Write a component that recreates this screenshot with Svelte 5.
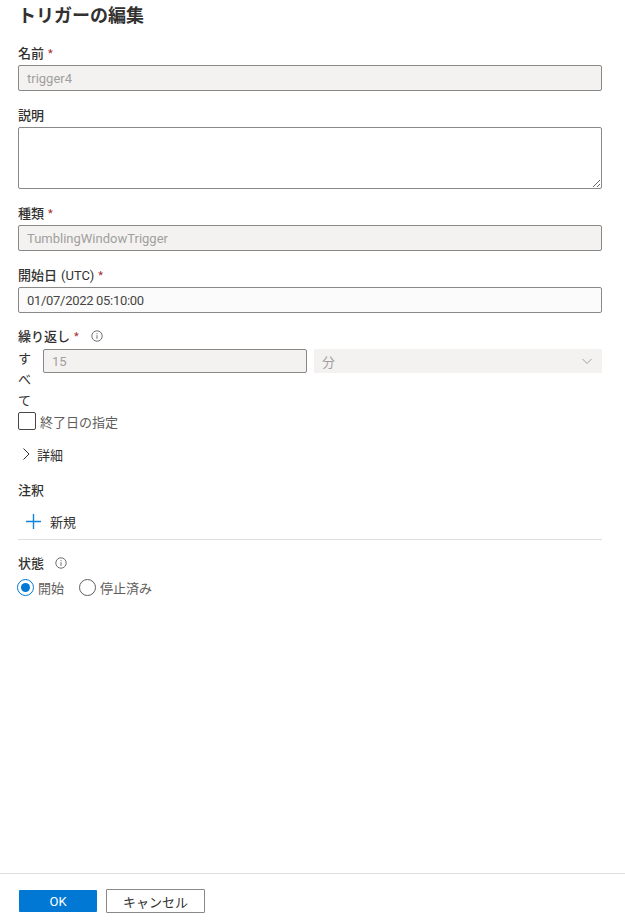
<script lang="ts">
  let description = $state('');
  let endDate = $state(false);
  let status = $state('started');
  let advancedOpen = $state(false);
</script>

<div class="panel">
  <main class="form">
    <h1>トリガーの編集</h1>

    <div class="field name">
      <div class="label">名前 <span class="req">*</span></div>
      <input class="text" type="text" value="trigger4" disabled />
    </div>

    <div class="field desc">
      <div class="label">説明</div>
      <textarea class="text area" bind:value={description}></textarea>
    </div>

    <div class="field kind">
      <div class="label">種類 <span class="req">*</span></div>
      <input class="text" type="text" value="TumblingWindowTrigger" disabled />
    </div>

    <div class="field start">
      <div class="label">開始日 <span class="utc">(UTC)</span> <span class="req">*</span></div>
      <input class="text live" type="text" value="01/07/2022 05:10:00" />
    </div>

    <div class="field repeat">
      <div class="label">
        繰り返し <span class="req">*</span>
        <svg class="info" viewBox="0 0 12 12" aria-hidden="true">
          <circle cx="6" cy="6" r="5.200" />
          <path d="M6 5.200v3.600M6 3.200v1" />
        </svg>
      </div>
      <div class="every">
        <span class="every-label">すべて</span>
        <input class="text short" type="text" value="15" disabled />
        <div class="select">
          <span>分</span>
          <svg viewBox="0 0 10 10" aria-hidden="true"><path d="M0.500 3l4.500 4.500L9.500 3" /></svg>
        </div>
      </div>
    </div>

    <label class="check">
      <input type="checkbox" bind:checked={endDate} />
      <span class="box"></span>
      <span>終了日の指定</span>
    </label>

    <button class="expander" onclick={() => (advancedOpen = !advancedOpen)}>
      <svg viewBox="0 0 8 12" aria-hidden="true"><path d="M1.500 0.500L7 6L1.500 11.500" /></svg>
      <span>詳細</span>
    </button>

    <div class="label notes">注釈</div>
    <button class="add">
      <svg viewBox="0 0 15 15" aria-hidden="true"><path d="M7.500 0v15M0 7.500h15" /></svg>
      <span>新規</span>
    </button>
    <hr />

    <div class="label state">
      状態
      <svg class="info" viewBox="0 0 12 12" aria-hidden="true">
        <circle cx="6" cy="6" r="5.200" />
        <path d="M6 5.200v3.600M6 3.200v1" />
      </svg>
    </div>
    <div class="radios">
      <label class="radio">
        <input type="radio" bind:group={status} value="started" />
        <span class="dot"></span>
        <span>開始</span>
      </label>
      <label class="radio">
        <input type="radio" bind:group={status} value="stopped" />
        <span class="dot"></span>
        <span>停止済み</span>
      </label>
    </div>
  </main>

  <footer>
    <button class="ok">OK</button>
    <button class="cancel">キャンセル</button>
  </footer>
</div>

<style>
  :global(body) {
    margin: 0;
    background: #fff;
  }

  .panel {
    height: 924px;
    display: flex;
    flex-direction: column;
    box-sizing: border-box;
    font-family: Roboto, "Noto Sans CJK JP", sans-serif;
    font-size: 13px;
    color: #323130;
  }

  .form {
    flex: 1;
    padding: 0 23px 0 18px;
  }

  h1 {
    margin: 0;
    padding-top: 3px;
    font-size: 18px;
    line-height: 26px;
    font-weight: 700;
  }

  .label {
    padding-top: 1px;
    line-height: 18px;
    font-weight: 500;
    display: flex;
    align-items: center;
    gap: 4px;
  }

  .utc {
    font-weight: 400;
  }

  .req {
    color: #a4262c;
    font-size: 11px;
    font-weight: 400;
  }

  .field {
    display: flex;
    flex-direction: column;
    gap: 2px;
  }

  .name,
  .desc,
  .kind,
  .start {
    margin-top: 15px;
  }

  .repeat {
    margin-top: 14px;
    gap: 3px;
  }

  .text {
    box-sizing: border-box;
    width: 100%;
    height: 26px;
    padding: 0 8px;
    border: 1px solid #8a8886;
    border-radius: 2px;
    font: inherit;
    color: #323130;
    background: #fff;
    outline: none;
  }

  .text:disabled {
    background: #f3f2f1;
    color: #a19f9d;
    opacity: 1;
  }

  .text.live {
    background: #fbfbfb;
    color: #484644;
    letter-spacing: -0.3px;
  }

  .area {
    display: block;
    height: 62px;
  }

  .every {
    display: flex;
    align-items: flex-start;
  }

  .every-label {
    width: 14px;
    line-height: 21px;
    margin: -1px 11px 1px 0;
    flex: none;
  }

  .short {
    flex: none;
    width: 264px;
    height: 24px;
  }

  .select {
    flex: 1;
    margin-left: 7px;
    height: 24px;
    box-sizing: border-box;
    padding: 0 10px 0 8px;
    background: #f3f2f1;
    color: #a19f9d;
    display: flex;
    align-items: center;
    justify-content: space-between;
  }

  .select svg {
    width: 10px;
    height: 10px;
    fill: none;
    stroke: #a19f9d;
    stroke-width: 1;
  }

  .info {
    width: 12px;
    height: 12px;
    margin: 0 0 2px 8px;
    fill: none;
    stroke: #605e5c;
    stroke-width: 0.9;
  }

  .state .info {
    margin-left: 7px;
  }

  .check {
    display: flex;
    align-items: center;
    gap: 4px;
    height: 18px;
    color: #605e5c;
  }

  .check input,
  .radio input {
    position: absolute;
    opacity: 0;
  }

  .box {
    box-sizing: border-box;
    width: 18px;
    height: 18px;
    border: 1px solid #484644;
    border-radius: 2px;
    background: #fff;
  }

  .expander,
  .add {
    display: flex;
    align-items: center;
    padding: 0;
    border: 0;
    background: none;
    font: inherit;
    color: inherit;
  }

  .expander {
    margin-top: 15px;
    height: 18px;
    gap: 7px;
    padding-left: 4px;
  }

  .expander svg {
    width: 8px;
    height: 12px;
    fill: none;
    stroke: #323130;
    stroke-width: 1;
  }

  .notes {
    margin-top: 18px;
  }

  .add {
    margin-top: 11px;
    height: 20px;
    gap: 9px;
    padding-left: 8px;
  }

  .add svg {
    flex: none;
    width: 15px;
    height: 15px;
    fill: none;
    stroke: #0a84dc;
    stroke-width: 1.400;
  }

  hr {
    margin: 8px 0 0;
    border: 0;
    border-top: 1px solid #e1dfdd;
  }

  .state {
    margin-top: 14px;
  }

  .radios {
    display: flex;
    gap: 15px;
    margin: 5px 0 0 -1px;
  }

  .radio {
    display: flex;
    align-items: center;
    gap: 4px;
    height: 18px;
    color: #605e5c;
  }

  .dot {
    box-sizing: border-box;
    position: relative;
    width: 17px;
    height: 17px;
    border: 1px solid #605e5c;
    border-radius: 50%;
  }

  .radio input:checked + .dot {
    border-color: #0078d4;
  }

  .radio input:checked + .dot::after {
    content: "";
    position: absolute;
    inset: 3px;
    border-radius: 50%;
    background: #0078d4;
  }

  footer {
    border-top: 1px solid #e1dfdd;
    height: 51px;
    box-sizing: border-box;
    padding: 16px 0 0 19px;
    display: flex;
    align-items: flex-start;
    gap: 9px;
  }

  footer button {
    box-sizing: border-box;
    font: inherit;
    height: 22px;
    border-radius: 1px;
    padding: 0;
  }

  .ok {
    width: 78px;
    border: 0;
    background: #0078d4;
    color: #fff;
  }

  .cancel {
    width: 99px;
    height: 24px;
    margin-top: -1px;
    border: 1px solid #8a8886;
    background: #fff;
    color: #323130;
  }
</style>
